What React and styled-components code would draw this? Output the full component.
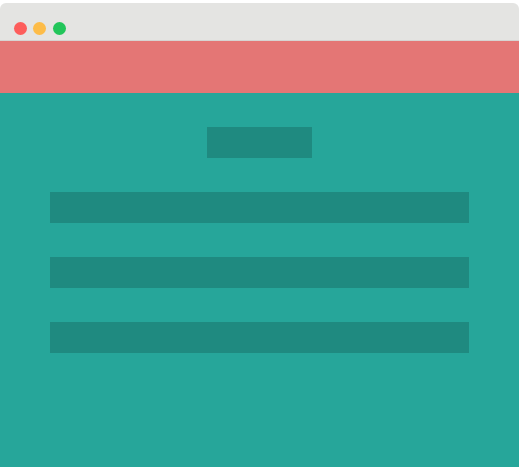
import React from "react";
import styled, { createGlobalStyle } from "styled-components";

const GlobalStyle = createGlobalStyle`
  html, body {
    margin: 0;
    padding: 0;
    background: #ffffff;
    font-family: "Liberation Sans", Arial, sans-serif;
  }
`;

const dots = ["#fd5d5b", "#fdbc48", "#22c55a"];

const App = () => {
  return (
    <>
      <GlobalStyle />
      <Window>
        <TitleBar>
          {dots.map((color) => (
            <Dot key={color} color={color} />
          ))}
        </TitleBar>
        <Header />
        <Content>
          <TitleBlock />
          <Line />
          <Line />
          <Line />
        </Content>
      </Window>
    </>
  );
};

const Window = styled.div`
  width: 519px;
  height: 464px;
  margin-top: 3px;
  display: flex;
  flex-direction: column;
  border-radius: 6px 6px 0 0;
  overflow: hidden;
`;

const TitleBar = styled.div`
  height: 38px;
  flex-shrink: 0;
  display: flex;
  align-items: center;
  gap: 6.5px;
  padding: 14px 0 0 13.5px;
  box-sizing: border-box;
  background: #e4e4e2;
  border-bottom: 1px solid #d6d4d2;
`;

const Dot = styled.span`
  width: 13px;
  height: 13px;
  border-radius: 50%;
  background: ${({ color }) => color};
`;

const Header = styled.div`
  height: 52px;
  flex-shrink: 0;
  background: #e47675;
`;

const Content = styled.div`
  flex: 1;
  display: flex;
  flex-direction: column;
  align-items: center;
  gap: 34px;
  padding-top: 34px;
  background: #26a69a;
`;

const TitleBlock = styled.div`
  width: 105px;
  height: 31px;
  background: #1f8a80;
`;

const Line = styled.div`
  width: 419px;
  height: 31px;
  background: #1f8a80;
`;

export default App;
